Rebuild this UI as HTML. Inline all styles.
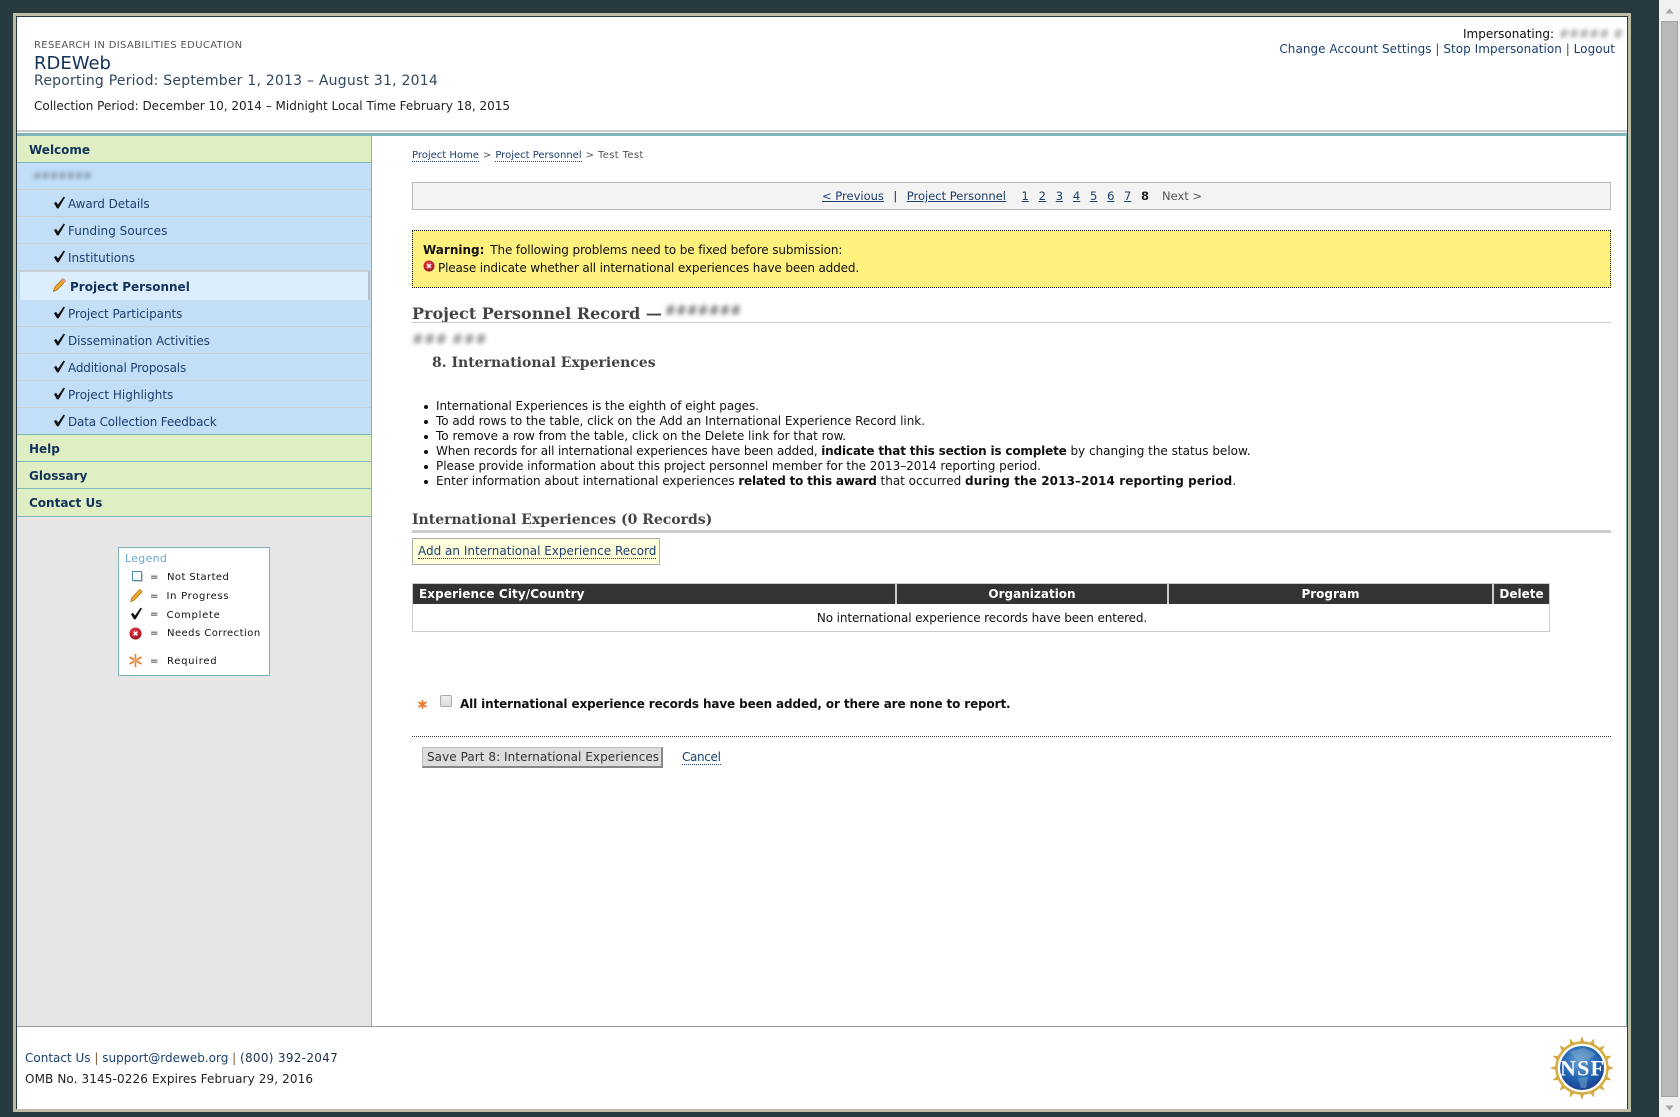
<!DOCTYPE html>
<html><head><meta charset="utf-8"><title>RDEWeb</title>
<style>
html,body{margin:0;padding:0;width:1680px;height:1117px;overflow:hidden;background:#263a3f}
body{position:relative;font-family:"DejaVu Sans",Verdana,sans-serif;font-size:12px;color:#111}
.a{position:absolute;white-space:nowrap}
.b{position:absolute;box-sizing:border-box}
a{color:#1c3f6e;text-decoration:none}
.u{text-decoration:underline}
.d{border-bottom:1px dotted #1c3f6e}
.nav{position:absolute;left:17px;width:354px;height:27px;box-sizing:border-box;background:#c2dff7;border-bottom:1px solid #c8cfd4;font-size:12px;line-height:28px;color:#1c3f6e}
.nav span{position:absolute;left:51px;white-space:nowrap}
.nav svg{position:absolute;left:36px;top:6px}
.gr{position:absolute;left:17px;width:354px;height:27px;box-sizing:border-box;background:#dfeec3;border-bottom:1px solid #7fb5b5;font-weight:bold;font-size:12px;line-height:28px;color:#12325a;padding-left:12px}
.bl{filter:blur(2.2px);color:#444}
.srf{font-family:"DejaVu Serif","Liberation Serif",serif;font-weight:bold;color:#444}
</style></head><body>
<!-- frame -->
<div class="b" style="left:13px;top:13px;width:1618px;height:1099px;background:#bdbda6"></div>
<div class="b" style="left:16px;top:16px;width:1612px;height:1093px;background:#fff;border:1px solid #263a3f;border-bottom:0"></div>
<!-- scrollbar -->
<div class="b" style="left:1659px;top:0;width:21px;height:1117px;background:#f0f0f0"></div>
<div class="b" style="left:1661px;top:21px;width:17px;height:1076px;background:#b9b9b9;border:1px solid #a4a4a4"></div>
<svg class="a" style="left:1665px;top:8px" width="9" height="6"><path d="M4.5 0.5L8.5 5.5H0.5Z" fill="#a6a6a6"/></svg>
<svg class="a" style="left:1665px;top:1105px" width="9" height="6"><path d="M0.5 0.5H8.5L4.5 5.5Z" fill="#a6a6a6"/></svg>
<!-- header -->
<div class="a" style="left:34px;top:39px;font-size:10px;color:#555;line-height:13px;letter-spacing:.35px">RESEARCH IN DISABILITIES EDUCATION</div>
<div class="a" style="left:34px;top:53px;font-size:18px;color:#12325a;line-height:22px">RDEWeb</div>
<div class="a" style="left:34px;top:72px;font-size:14px;color:#33475f;line-height:18px;letter-spacing:.22px">Reporting Period: September 1, 2013 – August 31, 2014</div>
<div class="a" style="left:34px;top:98px;font-size:12px;color:#222;line-height:17px">Collection Period: December 10, 2014 – Midnight Local Time February 18, 2015</div>
<div class="a" style="left:1463px;top:27px;font-size:12px;line-height:15px;color:#111">Impersonating:</div>
<div class="a bl" style="left:1559px;top:27px;font-size:12px;line-height:15px;color:#777">#####&nbsp;#</div>
<div class="a" style="right:65px;top:42px;font-size:12px;line-height:15px;color:#4a4a50;letter-spacing:.04px"><a>Change Account Settings</a> | <a>Stop Impersonation</a> | <a>Logout</a></div>
<div class="b" style="left:17px;top:130px;width:1610px;height:2px;background:#ccc"></div>
<div class="b" style="left:17px;top:133px;width:1610px;height:3px;background:#7fb5b5"></div>
<div class="b" style="left:1626px;top:136px;width:1px;height:890px;background:#7fb5b5"></div>
<!-- sidebar -->
<div class="b" style="left:17px;top:136px;width:355px;height:890px;background:#e6e6e6;border-right:1px solid #7fb5b5"></div>
<div class="gr" style="top:136px;height:27px">Welcome</div>
<div class="nav" style="top:163px"><span class="bl" style="left:16px;font-size:10px;color:#5a6a7a">#######</span></div>
<div class="nav" style="top:190px"><svg width="13" height="13" viewBox="0 0 13 13"><path d="M1 7.2L3 5.8L5 8.6L10.6 .6L12 1.4L5.6 12.4H4Z" fill="#111"/></svg><span style="letter-spacing:-.08px">Award Details</span></div>
<div class="nav" style="top:217px"><svg width="13" height="13" viewBox="0 0 13 13"><path d="M1 7.2L3 5.8L5 8.6L10.6 .6L12 1.4L5.6 12.4H4Z" fill="#111"/></svg><span style="letter-spacing:.03px">Funding Sources</span></div>
<div class="nav" style="top:244px"><svg width="13" height="13" viewBox="0 0 13 13"><path d="M1 7.2L3 5.8L5 8.6L10.6 .6L12 1.4L5.6 12.4H4Z" fill="#111"/></svg><span>Institutions</span></div>
<div class="b" style="left:17px;top:271px;width:354px;height:30px;background:#c2dff7"></div>
<div class="b" style="left:19px;top:271px;width:351px;height:30px;background:#dceefe;border:1px solid #c8cfd4;border-right:2px solid #b8bec4"></div>
<svg class="a" style="left:52px;top:277px" width="15" height="16" viewBox="0 0 15 16"><path d="M11 1.5L13.5 4L5 13L1.5 14.5L2.5 10.5Z" fill="#f0a92e" stroke="#b06a15" stroke-width=".8"/><path d="M11 1.5L13.5 4L12 5.5L9.5 3Z" fill="#e98"/></svg>
<div class="a" style="left:70px;top:279px;font-weight:bold;font-size:12px;color:#12325a;line-height:17px">Project Personnel</div>
<div class="nav" style="top:300px"><svg width="13" height="13" viewBox="0 0 13 13"><path d="M1 7.2L3 5.8L5 8.6L10.6 .6L12 1.4L5.6 12.4H4Z" fill="#111"/></svg><span style="letter-spacing:-.05px">Project Participants</span></div>
<div class="nav" style="top:327px"><svg width="13" height="13" viewBox="0 0 13 13"><path d="M1 7.2L3 5.8L5 8.6L10.6 .6L12 1.4L5.6 12.4H4Z" fill="#111"/></svg><span style="letter-spacing:-.09px">Dissemination Activities</span></div>
<div class="nav" style="top:354px"><svg width="13" height="13" viewBox="0 0 13 13"><path d="M1 7.2L3 5.8L5 8.6L10.6 .6L12 1.4L5.6 12.4H4Z" fill="#111"/></svg><span style="letter-spacing:-.16px">Additional Proposals</span></div>
<div class="nav" style="top:381px"><svg width="13" height="13" viewBox="0 0 13 13"><path d="M1 7.2L3 5.8L5 8.6L10.6 .6L12 1.4L5.6 12.4H4Z" fill="#111"/></svg><span>Project Highlights</span></div>
<div class="nav" style="top:408px;border-bottom-color:#7fb5b5"><svg width="13" height="13" viewBox="0 0 13 13"><path d="M1 7.2L3 5.8L5 8.6L10.6 .6L12 1.4L5.6 12.4H4Z" fill="#111"/></svg><span style="letter-spacing:-.18px">Data Collection Feedback</span></div>
<div class="gr" style="top:435px">Help</div>
<div class="gr" style="top:462px">Glossary</div>
<div class="gr" style="top:489px;height:28px">Contact Us</div>
<!-- legend -->
<div class="b" style="left:118px;top:547px;width:152px;height:129px;background:#fff;border:1px solid #7fb5b5"></div>
<div class="a" style="left:125px;top:552px;font-size:11px;line-height:14px;color:#6aa7cf;letter-spacing:.3px">Legend</div>
<svg class="a" style="left:131px;top:570px" width="13" height="13"><rect x="1.5" y="1.5" width="9" height="9" fill="#fff" stroke="#4a8fa8"/><path d="M11.5 3V11.5H3" stroke="#ccc" fill="none"/></svg>
<svg class="a" style="left:129px;top:588px" width="15" height="15" viewBox="0 0 15 16"><path d="M11 1.5L13.5 4L5 13L1.5 14.5L2.5 10.5Z" fill="#f0a92e" stroke="#b06a15" stroke-width=".8"/></svg>
<svg class="a" style="left:130px;top:607px" width="13" height="13" viewBox="0 0 13 13"><path d="M1 7.2L3 5.8L5 8.6L10.6 .6L12 1.4L5.6 12.4H4Z" fill="#111"/></svg>
<svg class="a" style="left:129px;top:627px" width="13" height="13"><defs><radialGradient id="r" cx=".45" cy=".35" r=".7"><stop offset="0" stop-color="#e84050"/><stop offset=".7" stop-color="#b81c28"/><stop offset="1" stop-color="#701018"/></radialGradient></defs><circle cx="6.5" cy="6.5" r="6" fill="url(#r)"/><path d="M4.7 4.7L8.3 8.3M8.3 4.7L4.7 8.3" stroke="#fff" stroke-width="1.5"/></svg>
<svg class="a" style="left:129px;top:654px" width="13" height="13"><path d="M6.5 0V13M0.5 3L12.5 10M12.5 3L0.5 10" stroke="#e8792a" stroke-width="1.6"/><circle cx="6.5" cy="6.5" r="2" fill="#f0a060"/></svg>
<div class="a" style="left:150px;top:571px;font-size:10px;line-height:14px">=</div>
<div class="a" style="left:150px;top:590px;font-size:10px;line-height:14px">=</div>
<div class="a" style="left:150px;top:608px;font-size:10px;line-height:14px">=</div>
<div class="a" style="left:150px;top:627px;font-size:10px;line-height:14px">=</div>
<div class="a" style="left:150px;top:655px;font-size:10px;line-height:14px">=</div>
<div class="a" style="left:167px;top:571px;font-size:10px;line-height:14px;letter-spacing:.42px">Not Started</div>
<div class="a" style="left:166.5px;top:590px;font-size:10px;line-height:14px;letter-spacing:.7px">In Progress</div>
<div class="a" style="left:166.5px;top:609px;font-size:10px;line-height:14px;letter-spacing:.72px">Complete</div>
<div class="a" style="left:167px;top:627px;font-size:10px;line-height:14px;letter-spacing:.46px">Needs Correction</div>
<div class="a" style="left:167px;top:655px;font-size:10px;line-height:14px;letter-spacing:.72px">Required</div>
<!-- main -->
<div class="a" style="left:412px;top:149px;font-size:10px;line-height:14px;color:#555"><a class="d">Project Home</a><span style="margin:0 4px">&gt;</span><a class="d">Project Personnel</a><span style="margin:0 4px">&gt;</span><span style="letter-spacing:.35px">Test Test</span></div>
<div class="b" style="left:412px;top:182px;width:1199px;height:28px;background:#f3f3f3;border:1px solid #bbb"></div>
<div class="a" style="left:822px;top:189px;font-size:11.5px;line-height:14px;color:#555"><a class="u">&lt; Previous</a><span style="margin:0 9.5px;color:#222">|</span><a class="u">Project Personnel</a><span style="margin-left:15.5px"><a class="u">1</a></span><span style="margin-left:9.8px"><a class="u">2</a></span><span style="margin-left:9.8px"><a class="u">3</a></span><span style="margin-left:9.8px"><a class="u">4</a></span><span style="margin-left:9.8px"><a class="u">5</a></span><span style="margin-left:9.8px"><a class="u">6</a></span><span style="margin-left:9.6px"><a class="u">7</a></span><b style="margin-left:9.6px;color:#222">8</b><span style="margin-left:13px">Next &gt;</span></div>
<div class="b" style="left:412px;top:230px;width:1199px;height:58px;background:#fff17e;border:1px dotted #111"></div>
<div class="a" style="left:423px;top:242px;font-size:12px;line-height:17px;color:#111"><b>Warning:</b> <span style="letter-spacing:-.12px;margin-left:2px">The following problems need to be fixed before submission:</span></div>
<svg class="a" style="left:423px;top:260px" width="12" height="12"><circle cx="6" cy="6" r="5.5" fill="url(#r)"/><path d="M4 4L8 8M8 4L4 8" stroke="#fff" stroke-width="1.5"/></svg>
<div class="a" style="left:438px;top:260px;font-size:12px;line-height:17px;color:#111;letter-spacing:-.14px">Please indicate whether all international experiences have been added.</div>
<div class="a srf" style="left:412px;top:303px;font-size:16px;line-height:22px">Project Personnel Record —</div>
<div class="a bl" style="left:665px;top:303px;font-size:13px;line-height:18px;font-weight:bold;color:#666">#######</div>
<div class="b" style="left:412px;top:322px;width:1199px;height:1px;background:#ccc"></div>
<div class="a bl" style="left:412px;top:332px;font-size:14px;line-height:17px;color:#666">###&nbsp;###</div>
<div class="a srf" style="left:432px;top:353px;font-size:14px;line-height:20px">8. International Experiences</div>
<div class="a" style="left:436px;top:399px;font-size:12px;line-height:15px;color:#111"><span style="letter-spacing:-.06px">International Experiences is the eighth of eight pages.</span><br><span style="letter-spacing:-.04px">To add rows to the table, click on the Add an International Experience Record link.</span><br>To remove a row from the table, click on the Delete link for that row.<br><span style="letter-spacing:-.135px">When records for all international experiences have been added, </span><b style="letter-spacing:-.17px">indicate that this section is complete</b> by changing the status below.<br><span style="letter-spacing:-.03px">Please provide information about this project personnel member for the 2013–2014 reporting period.</span><br><span style="letter-spacing:-.04px">Enter information about international experiences </span><b style="letter-spacing:-.2px">related to this award</b> that occurred <b style="letter-spacing:.1px">during the 2013–2014 reporting period</b>.</div>
<div class="b" style="left:424px;top:405px;width:4px;height:4px;border-radius:50%;background:#111"></div>
<div class="b" style="left:424px;top:420px;width:4px;height:4px;border-radius:50%;background:#111"></div>
<div class="b" style="left:424px;top:435px;width:4px;height:4px;border-radius:50%;background:#111"></div>
<div class="b" style="left:424px;top:450px;width:4px;height:4px;border-radius:50%;background:#111"></div>
<div class="b" style="left:424px;top:465px;width:4px;height:4px;border-radius:50%;background:#111"></div>
<div class="b" style="left:424px;top:480px;width:4px;height:4px;border-radius:50%;background:#111"></div>
<div class="a srf" style="left:412px;top:510px;font-size:14px;line-height:20px">International Experiences (0 Records)</div>
<div class="b" style="left:412px;top:530px;width:1199px;height:3px;background:#ccc"></div>
<div class="b" style="left:412px;top:538px;width:248px;height:27px;background:#ffffdc;border:1px solid #aaa"></div>
<div class="a" style="left:418px;top:544px;font-size:12px;line-height:14px"><a class="d">Add an International Experience Record</a></div>
<div class="b" style="left:412px;top:583px;width:1138px;height:49px;border:1px solid #ccc;background:#fff"></div>
<div class="b" style="left:413px;top:584px;width:1136px;height:20px;background:#333"></div>
<div class="b" style="left:895px;top:584px;width:2px;height:20px;background:#ccc"></div>
<div class="b" style="left:1167px;top:584px;width:2px;height:20px;background:#ccc"></div>
<div class="b" style="left:1492px;top:584px;width:2px;height:20px;background:#ccc"></div>
<div class="a" style="left:419px;top:586px;font-weight:bold;font-size:12px;line-height:16px;color:#fff;letter-spacing:.1px">Experience City/Country</div>
<div class="a" style="left:897px;width:270px;text-align:center;top:586px;font-weight:bold;font-size:12px;line-height:16px;color:#fff">Organization</div>
<div class="a" style="left:1169px;width:323px;text-align:center;top:586px;font-weight:bold;font-size:12px;line-height:16px;color:#fff">Program</div>
<div class="a" style="left:1494px;width:55px;text-align:center;top:586px;font-weight:bold;font-size:12px;line-height:16px;color:#fff">Delete</div>
<div class="a" style="left:414px;width:1136px;text-align:center;top:610px;font-size:12px;line-height:16px;color:#111;letter-spacing:-.12px">No international experience records have been entered.</div>
<svg class="a" style="left:417px;top:698px" width="11" height="13"><path d="M5.5 2V11M1.5 4L9.5 9M9.5 4L1.5 9" stroke="#e8792a" stroke-width="1.7"/></svg>
<div class="b" style="left:440px;top:695px;width:12px;height:12px;background:linear-gradient(#eee,#ddd);border:1px solid #aaa;border-radius:2px"></div>
<div class="a" style="left:460px;top:695px;font-weight:bold;font-size:12px;line-height:18px;color:#111;letter-spacing:-.13px">All international experience records have been added, or there are none to report.</div>
<div class="b" style="left:412px;top:736px;width:1199px;height:1px;border-top:1px dotted #333"></div>
<div class="b" style="left:422px;top:747px;width:241px;height:21px;background:#ddd;border:1px solid #bbb;border-right:2px solid #888;border-bottom:2px solid #888"></div>
<div class="a" style="left:427px;top:750px;font-size:12px;line-height:15px;color:#333;letter-spacing:.06px">Save Part 8: International Experiences</div>
<div class="a" style="left:682px;top:750px;font-size:12px;line-height:15px;letter-spacing:-.35px"><a class="d">Cancel</a></div>
<!-- footer -->
<div class="b" style="left:17px;top:1026px;width:1610px;height:1px;background:#999"></div>
<div class="a" style="left:25px;top:1050px;font-size:12px;line-height:17px;color:#7a5a30"><a>Contact Us</a> | <a>support@rdeweb.org</a> | <span style="color:#1c3050;letter-spacing:.3px">(800) 392-2047</span></div>
<div class="a" style="left:25px;top:1071px;font-size:12px;line-height:17px;color:#222;letter-spacing:.12px">OMB No. 3145-0226 Expires February 29, 2016</div>
<svg class="a" style="left:1549px;top:1035px" width="66" height="66" viewBox="-33 -33 66 66">
<defs><radialGradient id="g" cx=".45" cy=".35" r=".7"><stop offset="0" stop-color="#6ea4d8"/><stop offset=".6" stop-color="#1f62b0"/><stop offset="1" stop-color="#1a3a88"/></radialGradient></defs>
<g fill="#d4ac44">
<path d="M-3 -24L0 -32L3 -24Z"/>
<path d="M-3 -24L0 -32L3 -24Z" transform="rotate(22.5)"/><path d="M-3 -24L0 -32L3 -24Z" transform="rotate(45)"/><path d="M-3 -24L0 -32L3 -24Z" transform="rotate(67.5)"/><path d="M-3 -24L0 -32L3 -24Z" transform="rotate(90)"/><path d="M-3 -24L0 -32L3 -24Z" transform="rotate(112.5)"/><path d="M-3 -24L0 -32L3 -24Z" transform="rotate(135)"/><path d="M-3 -24L0 -32L3 -24Z" transform="rotate(157.5)"/><path d="M-3 -24L0 -32L3 -24Z" transform="rotate(180)"/><path d="M-3 -24L0 -32L3 -24Z" transform="rotate(202.5)"/><path d="M-3 -24L0 -32L3 -24Z" transform="rotate(225)"/><path d="M-3 -24L0 -32L3 -24Z" transform="rotate(247.5)"/><path d="M-3 -24L0 -32L3 -24Z" transform="rotate(270)"/><path d="M-3 -24L0 -32L3 -24Z" transform="rotate(292.5)"/><path d="M-3 -24L0 -32L3 -24Z" transform="rotate(315)"/><path d="M-3 -24L0 -32L3 -24Z" transform="rotate(337.5)"/>
</g>
<circle r="25.5" fill="#fff" stroke="#d4ac44" stroke-width="2.5"/>
<circle r="22" fill="url(#g)"/>
<path d="M-12 -16L2 -20L14 -14L6 -8L-6 -9ZM-4 10L6 9L4 20L-1 20Z" fill="#7fa9c9" opacity=".5"/>
<text x="0" y="7.5" text-anchor="middle" font-family="Liberation Serif,serif" font-size="22" font-weight="bold" fill="#fff" textLength="44">NSF</text>
</svg>
</body></html>
